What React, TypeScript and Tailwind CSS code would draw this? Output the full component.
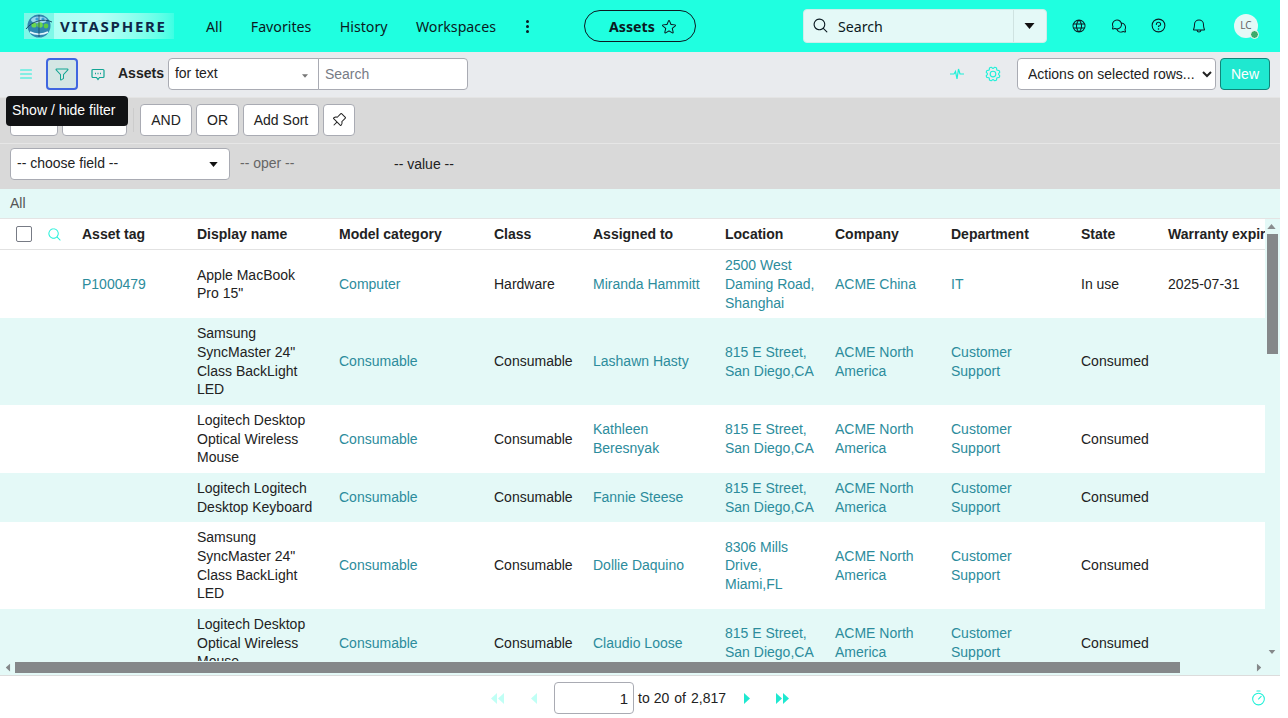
import { PiGlobe, PiChatsCircle, PiQuestion, PiBell, PiStar, PiList, PiFunnel, PiPushPin, PiGear, PiTimer, PiMagnifyingGlass } from "react-icons/pi";

const COLS = "grid grid-cols-[82px_115px_142px_155px_99px_132px_110px_116px_130px_87px_140px]";

interface Row {
  tag?: string;
  name: string;
  category: string;
  cls: string;
  assigned: string;
  location: string;
  company: string;
  department: string;
  state: string;
  warranty?: string;
}

const rows: Row[] = [
  { tag: "P1000479", name: 'Apple MacBook Pro 15"', category: "Computer", cls: "Hardware", assigned: "Miranda Hammitt", location: "2500 West Daming Road, Shanghai", company: "ACME China", department: "IT", state: "In use", warranty: "2025-07-31" },
  { name: 'Samsung SyncMaster 24" Class BackLight LED', category: "Consumable", cls: "Consumable", assigned: "Lashawn Hasty", location: "815 E Street, San Diego,CA", company: "ACME North America", department: "Customer Support", state: "Consumed" },
  { name: "Logitech Desktop Optical Wireless Mouse", category: "Consumable", cls: "Consumable", assigned: "Kathleen Beresnyak", location: "815 E Street, San Diego,CA", company: "ACME North America", department: "Customer Support", state: "Consumed" },
  { name: "Logitech Logitech Desktop Keyboard", category: "Consumable", cls: "Consumable", assigned: "Fannie Steese", location: "815 E Street, San Diego,CA", company: "ACME North America", department: "Customer Support", state: "Consumed" },
  { name: 'Samsung SyncMaster 24" Class BackLight LED', category: "Consumable", cls: "Consumable", assigned: "Dollie Daquino", location: "8306 Mills Drive, Miami,FL", company: "ACME North America", department: "Customer Support", state: "Consumed" },
  { name: "Logitech Desktop Optical Wireless Mouse", category: "Consumable", cls: "Consumable", assigned: "Claudio Loose", location: "815 E Street, San Diego,CA", company: "ACME North America", department: "Customer Support", state: "Consumed" },
];

const headers = ["Asset tag", "Display name", "Model category", "Class", "Assigned to", "Location", "Company", "Department", "State", "Warranty expiration"];

function Logo() {
  return (
    <div className="flex items-center h-[26px] w-[150px] bg-gradient-to-r from-[#a8fff3] via-[#b8fff7] to-[#3dffe4]">
      <svg width="30" height="26" viewBox="0 0 30 26" className="bg-[#7ff8e8]">
        <circle cx="15" cy="13" r="11.5" fill="#2f86b0" />
        <ellipse cx="15" cy="7" rx="8" ry="3.5" fill="#9fd6ee" />
        <circle cx="10" cy="12" r="2.6" fill="#6ad84f" />
        <circle cx="16" cy="12" r="2.8" fill="#6ad84f" />
        <circle cx="22" cy="13" r="2.4" fill="#5ccc42" />
        <circle cx="13" cy="6" r="1.6" fill="#3aa0d8" />
        <circle cx="19" cy="6" r="1.6" fill="#3aa0d8" />
        <path d="M6 19c5 3 13 3 18 0" stroke="#e4f8ff" strokeWidth="1.5" fill="none" />
        <path d="M2 16C8 8 20 5 28 9" stroke="#12405f" strokeWidth="0.9" fill="none" />
        <path d="M15 2v22" stroke="#12405f" strokeWidth="0.7" />
      </svg>
      <span className="ml-[6px] font-['Noto_Sans',sans-serif] font-bold text-[15px] tracking-[1.75px] text-[#0d2748] leading-none">VITASPHERE</span>
    </div>
  );
}

function Caret({ className }: { className: string }) {
  return (
    <svg viewBox="0 0 10 6" className={className}>
      <path d="M0 0h10L5 6z" fill="currentColor" />
    </svg>
  );
}

function Tri({ dir, double, color }: { dir: "l" | "r"; double?: boolean; color: string }) {
  const one = dir === "r" ? "M0 0l6 5.5L0 11z" : "M6 0L0 5.5 6 11z";
  return (
    <svg width={double ? 13 : 6} height="11" viewBox={double ? "0 0 13 11" : "0 0 6 11"} className={color}>
      <path d={one} fill="currentColor" />
      {double && <path d={one} fill="currentColor" transform="translate(7 0)" />}
    </svg>
  );
}

function GreyBtn({ children, className }: { children?: React.ReactNode; className: string }) {
  return (
    <button className={`h-8 rounded bg-white border border-[#a9abb3] text-[14px] text-[#222] flex items-center justify-center ${className}`}>
      {children}
    </button>
  );
}

export default function App() {
  return (
    <div className="w-[1280px] h-[718px] overflow-hidden relative flex flex-col font-['Liberation_Sans',Arial,sans-serif] text-[14px] text-[#222] bg-white">

      {/* HEADER */}
      <div className="h-[52px] shrink-0 bg-[#1fffe0] flex items-center pl-6 font-['Noto_Sans',sans-serif] text-[#0b1a22]">
        <Logo />
        <div className="flex items-center gap-[28.4px] ml-8 pt-[1px] text-[14.2px]">
          <span>All</span>
          <span>Favorites</span>
          <span>History</span>
          <span>Workspaces</span>
        </div>
        <div className="ml-[30px] flex flex-col gap-[2px]">
          <span className="w-[3px] h-[3px] rounded-full bg-[#0b1a22]" />
          <span className="w-[3px] h-[3px] rounded-full bg-[#0b1a22]" />
          <span className="w-[3px] h-[3px] rounded-full bg-[#0b1a22]" />
        </div>
        <div className="ml-[55px] w-[112px] h-8 rounded-full border border-[#0b1a22] flex items-center justify-center gap-[6px] pl-[6px] pt-[1px] font-bold text-[14.2px]">
          Assets <PiStar size={16} />
        </div>
        <div className="ml-[107px] w-[244px] h-[34px] rounded bg-[#e4f9f7] border border-[#cdeeea] flex items-center">
          <PiMagnifyingGlass size={17} className="ml-[8px] -mt-[1px]" />
          <span className="ml-[9px] flex-1 pt-[1px] text-[14.2px]">Search</span>
          <div className="w-[33px] h-full border-l border-[#cfe3e1] flex items-center justify-center">
            <Caret className="w-[11px] h-[6px] text-[#111]" />
          </div>
        </div>
        <div className="flex items-center ml-[24px] gap-[24px] -mt-[1px]">
          <PiGlobe size={16} />
          <PiChatsCircle size={16} />
          <PiQuestion size={17} className="-ml-[1px]" />
          <PiBell size={16} />
        </div>
        <div className="relative ml-[27px] -mt-[1px] w-6 h-6 rounded-full bg-[#e4f9f7] flex items-center justify-center text-[10px] text-[#666]">
          LC
          <span className="absolute right-[-1px] bottom-[-1px] w-[9px] h-[9px] rounded-full bg-[#3caa6b] border border-white" />
        </div>
      </div>

      {/* TOOLBAR */}
      <div className="h-[45px] shrink-0 bg-[#e9ebee] flex items-center pl-[18px] pr-[10px] pb-[1px]">
        <PiList size={16} className="text-[#1ff0d8]" />
        <div className="ml-3 w-8 h-8 rounded border-2 border-[#3f66e0] bg-[#d4e6e4] flex items-center justify-center">
          <PiFunnel size={16} className="text-[#13a594]" />
        </div>
        <svg width="14" height="14" viewBox="0 0 14 14" className="ml-[13px] text-[#13a594]">
          <path d="M2 2.5h10a1 1 0 0 1 1 1v6a1 1 0 0 1-1 1H8.5L7 12.5 5.5 10.5H2a1 1 0 0 1-1-1v-6a1 1 0 0 1 1-1z" fill="none" stroke="currentColor" strokeWidth="1.2" />
          <path d="M4 6.5h1M6.5 6.5h1M9 6.5h1" stroke="currentColor" strokeWidth="1.3" />
        </svg>
        <span className="ml-[13px] font-bold pb-[1px]">Assets</span>
        <div className="ml-1 w-[151px] h-8 rounded-l bg-white border border-[#a9abb3] flex items-center justify-between pl-[6px] pr-[10px] pb-[1px]">
          for text
          <Caret className="w-[6px] h-1 text-[#777] mt-1" />
        </div>
        <input placeholder="Search" className="w-[150px] h-8 -ml-px rounded-r bg-white border border-[#a9abb3] px-[6px] text-[14px] outline-none placeholder:text-[#777b85]" />
        <svg width="16" height="14" viewBox="0 0 16 14" className="ml-auto text-[#1ff0d8]">
          <path d="M1 7h4l1.5-2.5L8 12l1.5-10L11 7h4" fill="none" stroke="currentColor" strokeWidth="1.2" />
        </svg>
        <PiGear size={18} className="ml-[19px] text-[#1ff0d8]" />
        <select className="ml-[15px] w-[199px] h-8 rounded bg-white border border-[#a9abb3] pl-[6px] text-[14px] outline-none">
          <option>Actions on selected rows...</option>
        </select>
        <button className="ml-1 w-[50px] h-8 rounded bg-[#1fe8d0] border border-[#10857a] text-white text-[14px]">New</button>
      </div>

      {/* FILTER */}
      <div className="shrink-0 bg-[#d9d9d9] border-t border-[#e4e4e4]">
        <div className="h-[46px] flex items-center gap-1 pl-[10px] pb-[1px] border-b border-[#e6e6e6]">
          <GreyBtn className="w-12" />
          <GreyBtn className="w-[65px]" />
          <span className="w-px h-6 bg-[#cccccc] mx-[2px]" />
          <GreyBtn className="w-[52px]">AND</GreyBtn>
          <GreyBtn className="w-[43px]">OR</GreyBtn>
          <GreyBtn className="w-[76px]">Add Sort</GreyBtn>
          <GreyBtn className="w-8"><PiPushPin size={16} /></GreyBtn>
        </div>
        <div className="h-[45px] flex items-center pl-[10px] pb-[5px]">
          <div className="w-[220px] h-8 rounded bg-white border border-[#a9abb3] flex items-center justify-between pl-[6px] pr-[11px] pb-[1px]">
            -- choose field --
            <Caret className="w-[9px] h-[5px] text-[#111] mt-[2px]" />
          </div>
          <span className="ml-[10px] w-[154px] text-[#666] pb-[2px]">-- oper --</span>
          <span>-- value --</span>
        </div>
      </div>

      {/* TITLE */}
      <div className="h-[30px] shrink-0 bg-[#e4f9f7] border-b border-[#e4e4e4] flex items-center pl-[10px] text-[#555]">All</div>

      {/* TABLE */}
      <div className="relative flex-1 min-h-0 bg-[#e4f9f7] overflow-hidden border-b border-[#dcdcdc]">
        <div className="w-[1265px] overflow-hidden">
          <div className={`${COLS} h-[31.4px] items-center bg-white border-b border-[#e2e2e2] font-bold whitespace-nowrap`}>
            <div className="flex items-center pl-4">
              <span className="w-4 h-4 rounded-[2px] border border-[#777b85] bg-white" />
              <PiMagnifyingGlass size={15} className="ml-[15px] text-[#1ff0d8]" />
            </div>
            {headers.map((h) => (
              <div key={h}>{h}</div>
            ))}
          </div>
          {rows.map((r, i) => (
            <div key={i} className={`${COLS} items-center py-[6px] leading-[18.67px] ${i % 2 === 0 ? "bg-white" : "bg-[#e4f9f7]"}`}>
              <div />
              <div className="text-[#2c8c9c] pr-2">{r.tag}</div>
              <div className="pr-5">{r.name}</div>
              <div className="text-[#2c8c9c]">{r.category}</div>
              <div>{r.cls}</div>
              <div className="text-[#2c8c9c] pr-4">{r.assigned}</div>
              <div className="text-[#2c8c9c] pr-4">{r.location}</div>
              <div className="text-[#2c8c9c] pr-2">{r.company}</div>
              <div className="text-[#2c8c9c] pr-8">{r.department}</div>
              <div>{r.state}</div>
              <div>{r.warranty}</div>
            </div>
          ))}
        </div>

        {/* scrollbars */}
        <div className="absolute left-0 right-[15px] bottom-0 h-[14px] bg-[#e4f9f7]" />
        <Caret className="absolute left-[1267px] top-[5px] w-[9px] h-[5px] text-[#8a8d8f] rotate-180" />
        <div className="absolute left-[1267px] top-[15px] w-[11px] h-[120px] bg-[#85888a]" />
        <Caret className="absolute left-[1268px] bottom-[21px] w-[8px] h-[4px] text-[#85888a]" />
        <div className="absolute left-[5px] bottom-[2px]"><Tri dir="l" color="text-[#85888a] scale-75" /></div>
        <div className="absolute left-[15px] bottom-[2px] w-[1165px] h-[11px] bg-[#85888a]" />
        <div className="absolute left-[1256px] bottom-[2px]"><Tri dir="r" color="text-[#85888a] scale-75" /></div>
      </div>

      {/* FOOTER */}
      <div className="h-[42px] shrink-0 relative flex items-center justify-center bg-white pt-[2px]">
        <Tri dir="l" double color="text-[#c0fff5]" />
        <span className="ml-[27px]"><Tri dir="l" color="text-[#c0fff5]" /></span>
        <input readOnly value="1" className="ml-[17px] w-20 h-8 rounded border border-[#a9abb3] text-right pr-[5px] text-[15px] outline-none" />
        <span className="ml-1">to</span>
        <span className="ml-1">20</span>
        <span className="ml-[5px]">of</span>
        <span className="ml-[5px]">2,817</span>
        <span className="ml-[18px]"><Tri dir="r" color="text-[#1fe8d0]" /></span>
        <span className="ml-[26px]"><Tri dir="r" double color="text-[#1fe8d0]" /></span>
        <PiTimer size={17} className="absolute left-[1250px] top-[14px] text-[#1ff0d8]" />
      </div>

      {/* TOOLTIP */}
      <div className="absolute left-[6px] top-[96px] w-[122px] h-[30px] rounded bg-[#111214] text-white flex items-center pl-[6px] pb-[2px]">
        Show / hide filter
      </div>
    </div>
  );
}
